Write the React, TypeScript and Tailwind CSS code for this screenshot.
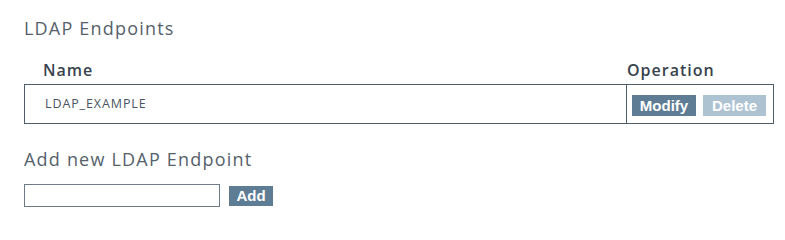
import React from 'react'

const endpoints = ['LDAP_EXAMPLE']

export default function App() {
    return (
        <div className="w-[785px] h-[223px] bg-white pl-6 pt-4 font-['Open_Sans',sans-serif]">
            <h2 className="text-[18px] leading-[24px] tracking-[1.2px] text-[#56616b]">LDAP Endpoints</h2>

            <div className="w-[750px] mt-[19px]">
                {/* header */}
                <div className="flex text-[16px] leading-[22px] font-semibold tracking-[1px] text-[#38434e]">
                    <div className="w-[603px] pl-[19px]">Name</div>
                    <div className="flex-1">Operation</div>
                </div>
                {/* rows */}
                <div className="mt-[3px] border border-[#4f5c69]">
                    {endpoints.map((name) => (
                        <div key={name} className="flex h-[38px]">
                            <div className="w-[602px] border-r border-[#4f5c69] pl-5 flex items-center text-[12.5px] tracking-[0.9px] text-[#4a5560]">
                                {name}
                            </div>
                            <div className="flex-1 flex items-start pt-[10px] pl-[5px] gap-[7px] font-['Liberation_Sans',Arial,sans-serif]">
                                <button className="w-[64px] h-[21px] bg-[#5e7c94] text-white text-[15px] font-bold leading-none">
                                    Modify
                                </button>
                                <button className="w-[63px] h-[21px] bg-[#adc3d2] text-white text-[15px] font-bold leading-none">
                                    Delete
                                </button>
                            </div>
                        </div>
                    ))}
                </div>
            </div>

            <h2 className="mt-[23px] text-[18px] leading-[24px] tracking-[1.2px] text-[#56616b]">Add new LDAP Endpoint</h2>
            <div className="mt-[13px] flex items-center gap-[9px]">
                <input className="w-[196px] h-[23px] border border-[#6d7b88] outline-none" />
                <button className="w-[44px] h-[20px] bg-[#5e7c94] text-white text-[15px] font-bold leading-none font-['Liberation_Sans',Arial,sans-serif]">
                    Add
                </button>
            </div>
        </div>
    )
}
